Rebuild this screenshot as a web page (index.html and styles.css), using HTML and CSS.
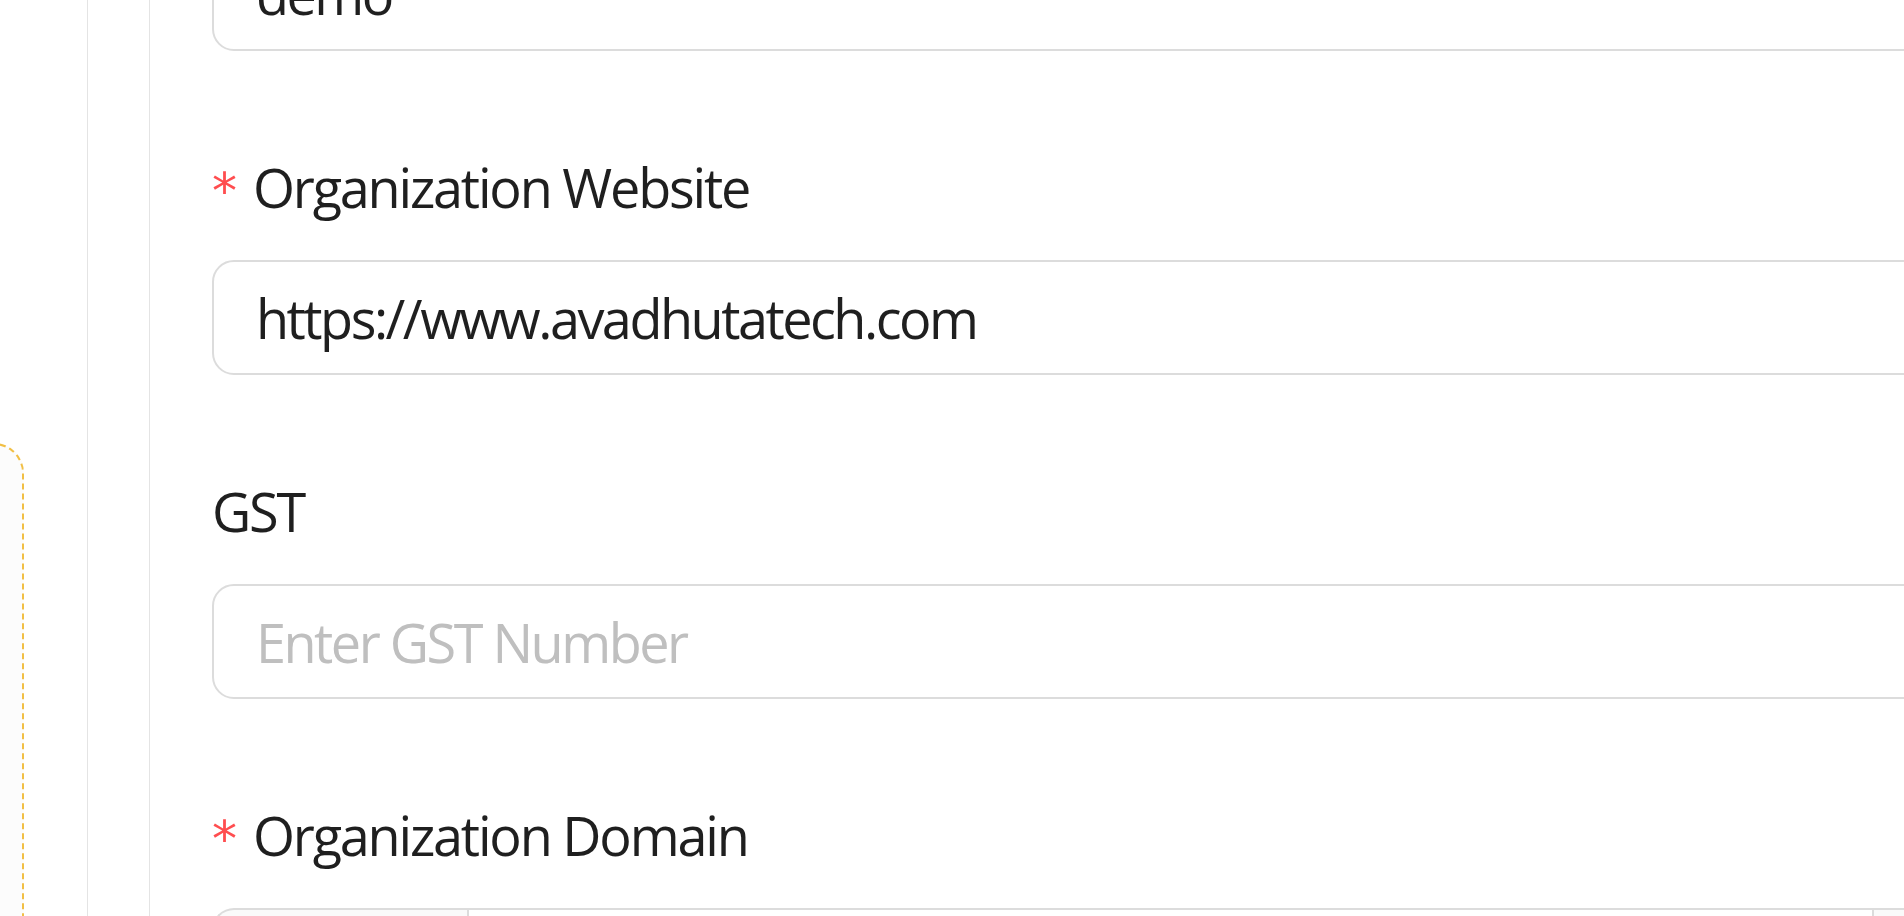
FILE: index.html
```html
<!DOCTYPE html>
<html lang="en">
<head>
<meta charset="utf-8">
<title>Organization Settings</title>
<link rel="stylesheet" href="styles.css">
</head>
<body>
<div class="layout">
  <aside class="rail">
    <div class="card"></div>
  </aside>
  <div class="gutter"></div>
  <main class="main">
    <form class="form">
      <div class="item">
        <input class="input" type="text" value="demo">
      </div>
      <div class="item">
        <label class="label"><span class="req">*</span>Organization Website</label>
        <input class="input" type="text" value="https://www.avadhutatech.com">
      </div>
      <div class="item">
        <label class="label">GST</label>
        <input class="input" type="text" placeholder="Enter GST Number">
      </div>
      <div class="item">
        <label class="label"><span class="req">*</span>Organization Domain</label>
        <div class="group">
          <span class="addon addon-left"></span>
          <input class="input input-mid" type="text">
          <span class="addon addon-right"></span>
        </div>
      </div>
    </form>
  </main>
</div>
</body>
</html>
```

FILE: styles.css
```css
* { box-sizing: border-box; }

html, body {
  margin: 0;
  padding: 0;
  background: #ffffff;
  overflow: hidden;
  height: 916px;
}

body {
  font-family: "Open Sans", "Noto Sans", sans-serif;
  color: #1f1f1f;
}

.layout {
  display: flex;
  height: 916px;
  width: 1904px;
  overflow: hidden;
}

.rail {
  width: 88px;
  flex: 0 0 88px;
  border-right: 1px solid #e4e4e4;
  overflow: hidden;
}

.card {
  margin-top: 443px;
  margin-left: -60px;
  width: 84px;
  height: 700px;
  border: 2px dashed #f1bf45;
  border-radius: 30px;
  background: #fcfcfc;
}

.gutter {
  width: 62px;
  flex: 0 0 62px;
  border-right: 1px solid #e4e4e4;
}

.main {
  flex: 1 1 auto;
  padding-left: 62px;
  overflow: hidden;
}

.form {
  width: 2000px;
  margin-top: -64px;
}

.item {
  margin-bottom: 96px;
}

.label {
  display: block;
  font-size: 54px;
  line-height: 81px;
  height: 81px;
  margin-bottom: 32px;
  letter-spacing: -2.2px;
  color: #1f1f1f;
  white-space: nowrap;
}

.req {
  display: inline-block;
  width: 41px;
  color: #ff4d4f;
  font-family: "DejaVu Sans", sans-serif;
  font-size: 50px;
  letter-spacing: 0;
}

.input {
  display: block;
  width: 100%;
  height: 115px;
  border: 2px solid #dcdcdc;
  border-radius: 22px;
  padding: 0 42px;
  font-family: "Open Sans", "Noto Sans", sans-serif;
  font-size: 54px;
  letter-spacing: -2.5px;
  color: #1f1f1f;
  background: #ffffff;
  outline: none;
}

.input::placeholder {
  color: #bfbfbf;
}

.group {
  display: flex;
  width: 100%;
  height: 115px;
}

.addon {
  display: block;
  height: 115px;
  border: 2px solid #dcdcdc;
  background: #fafafa;
}

.addon-left {
  width: 255px;
  flex: 0 0 255px;
  border-right: none;
  border-radius: 22px 0 0 22px;
}

.input-mid {
  width: 1407px;
  flex: 0 0 1407px;
  border-radius: 0;
}

.addon-right {
  flex: 1 1 auto;
  border-left: none;
  border-radius: 0 22px 22px 0;
}
```
